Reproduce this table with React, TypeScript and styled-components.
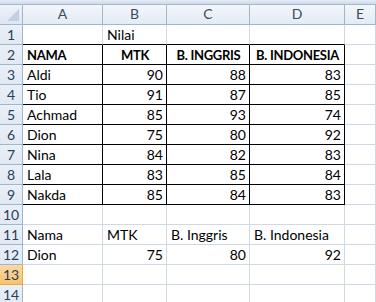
import React from "react";
import styled, { createGlobalStyle } from "styled-components";

const GlobalStyle = createGlobalStyle`
  html, body {
    margin: 0;
    padding: 0;
    background: #ffffff;
  }
`;

const GRID = "#d0d7e5";
const HEAD_LINE = "#9eb6ce";

const columns = ["A", "B", "C", "D", "E"];

type Align = "left" | "center" | "right";

type CellData = {
  text?: string | number;
  align?: Align;
  bold?: boolean;
};

type RowData = {
  cells: CellData[];
  boxed?: boolean;
  boxTop?: boolean;
};

const Page = styled.div`
  width: 376px;
  height: 302px;
  overflow: hidden;
  background: #ffffff;
  font-family: Lato, "Liberation Sans", sans-serif;
`;

const TopStrip = styled.div`
  height: 4px;
  background: linear-gradient(#e3ebf5, #cfdbea);
  border-bottom: 1px solid #a6b7cc;
`;

const Sheet = styled.div`
  display: grid;
  grid-template-columns: 23px 80px 64px 83px 95px 1fr;
  grid-auto-rows: 20px;
`;

const Corner = styled.div`
  position: relative;
  background: linear-gradient(#eef3fa, #dde6f2);
  border-right: 1px solid ${HEAD_LINE};
  border-bottom: 1px solid ${HEAD_LINE};
  box-sizing: border-box;

  &::after {
    content: "";
    position: absolute;
    right: 3px;
    bottom: 3px;
    border-left: 12px solid transparent;
    border-bottom: 12px solid #c2cfe0;
  }
`;

const ColHead = styled.div`
  display: flex;
  align-items: flex-end;
  justify-content: center;
  padding-bottom: 1px;
  box-sizing: border-box;
  background: linear-gradient(#f3f6fb, #e4ebf5);
  border-right: 1px solid ${HEAD_LINE};
  border-bottom: 1px solid ${HEAD_LINE};
  color: #3d4a5c;
  font-size: 14px;
  line-height: 18px;
`;

const RowHead = styled.div<{ $active?: boolean }>`
  display: flex;
  align-items: flex-end;
  justify-content: center;
  box-sizing: border-box;
  background: ${(p) =>
    p.$active
      ? "linear-gradient(#fbd9a3, #f6c46f)"
      : "linear-gradient(#eaf0f8, #e2e9f4)"};
  border-right: 1px solid ${(p) => (p.$active ? "#f2a83c" : HEAD_LINE)};
  border-bottom: 1px solid ${(p) => (p.$active ? "#f2a83c" : HEAD_LINE)};
  color: #2c3e57;
  font-size: 14px;
  line-height: 18px;
`;

const Cell = styled.div<{
  $align: Align;
  $bold?: boolean;
  $boxRight?: boolean;
  $boxBottom?: boolean;
}>`
  display: flex;
  align-items: flex-end;
  justify-content: ${(p) =>
    p.$align === "right"
      ? "flex-end"
      : p.$align === "center"
      ? "center"
      : "flex-start"};
  padding: 0 3px 0 4px;
  box-sizing: border-box;
  white-space: nowrap;
  border-right: 1px solid ${(p) => (p.$boxRight ? "#000" : GRID)};
  border-bottom: 1px solid ${(p) => (p.$boxBottom ? "#000" : GRID)};
  color: #000;
  font-size: ${(p) => (p.$bold ? "13px" : "14px")};
  font-weight: ${(p) => (p.$bold ? 700 : 400)};
  letter-spacing: ${(p) => (p.$bold ? "-0.3px" : "0")};
  line-height: 18px;
`;

const scores: [string, number, number, number][] = [
  ["Aldi", 90, 88, 83],
  ["Tio", 91, 87, 85],
  ["Achmad", 85, 93, 74],
  ["Dion", 75, 80, 92],
  ["Nina", 84, 82, 83],
  ["Lala", 83, 85, 84],
  ["Nakda", 85, 84, 83],
];

const rows: RowData[] = [
  { cells: [{}, { text: "Nilai" }, {}, {}], boxTop: true },
  {
    boxed: true,
    cells: [
      { text: "NAMA", bold: true },
      { text: "MTK", bold: true, align: "center" },
      { text: "B. INGGRIS", bold: true, align: "center" },
      { text: "B. INDONESIA", bold: true, align: "center" },
    ],
  },
  ...scores.map(([name, mtk, ing, ind]) => ({
    boxed: true,
    cells: [
      { text: name },
      { text: mtk, align: "right" as Align },
      { text: ing, align: "right" as Align },
      { text: ind, align: "right" as Align },
    ],
  })),
  { cells: [{}, {}, {}, {}] },
  {
    cells: [
      { text: "Nama" },
      { text: "MTK" },
      { text: "B. Inggris" },
      { text: "B. Indonesia" },
    ],
  },
  {
    cells: [
      { text: "Dion" },
      { text: 75, align: "right" },
      { text: 80, align: "right" },
      { text: 92, align: "right" },
    ],
  },
  { cells: [{}, {}, {}, {}] },
  { cells: [{}, {}, {}, {}] },
];

export default function App() {
  return (
    <Page>
      <GlobalStyle />
      <TopStrip />
      <Sheet>
        <Corner />
        {columns.map((c) => (
          <ColHead key={c}>{c}</ColHead>
        ))}

        {rows.map((row, r) => (
          <React.Fragment key={r}>
            <RowHead $active={r + 1 === 13}>{r + 1}</RowHead>
            {row.cells.map((cell, c) => (
              <Cell
                key={c}
                $align={cell.align ?? "left"}
                $bold={cell.bold}
                $boxRight={row.boxed}
                $boxBottom={row.boxed || row.boxTop}
              >
                {cell.text}
              </Cell>
            ))}
            <Cell $align="left" />
          </React.Fragment>
        ))}
      </Sheet>
    </Page>
  );
}
